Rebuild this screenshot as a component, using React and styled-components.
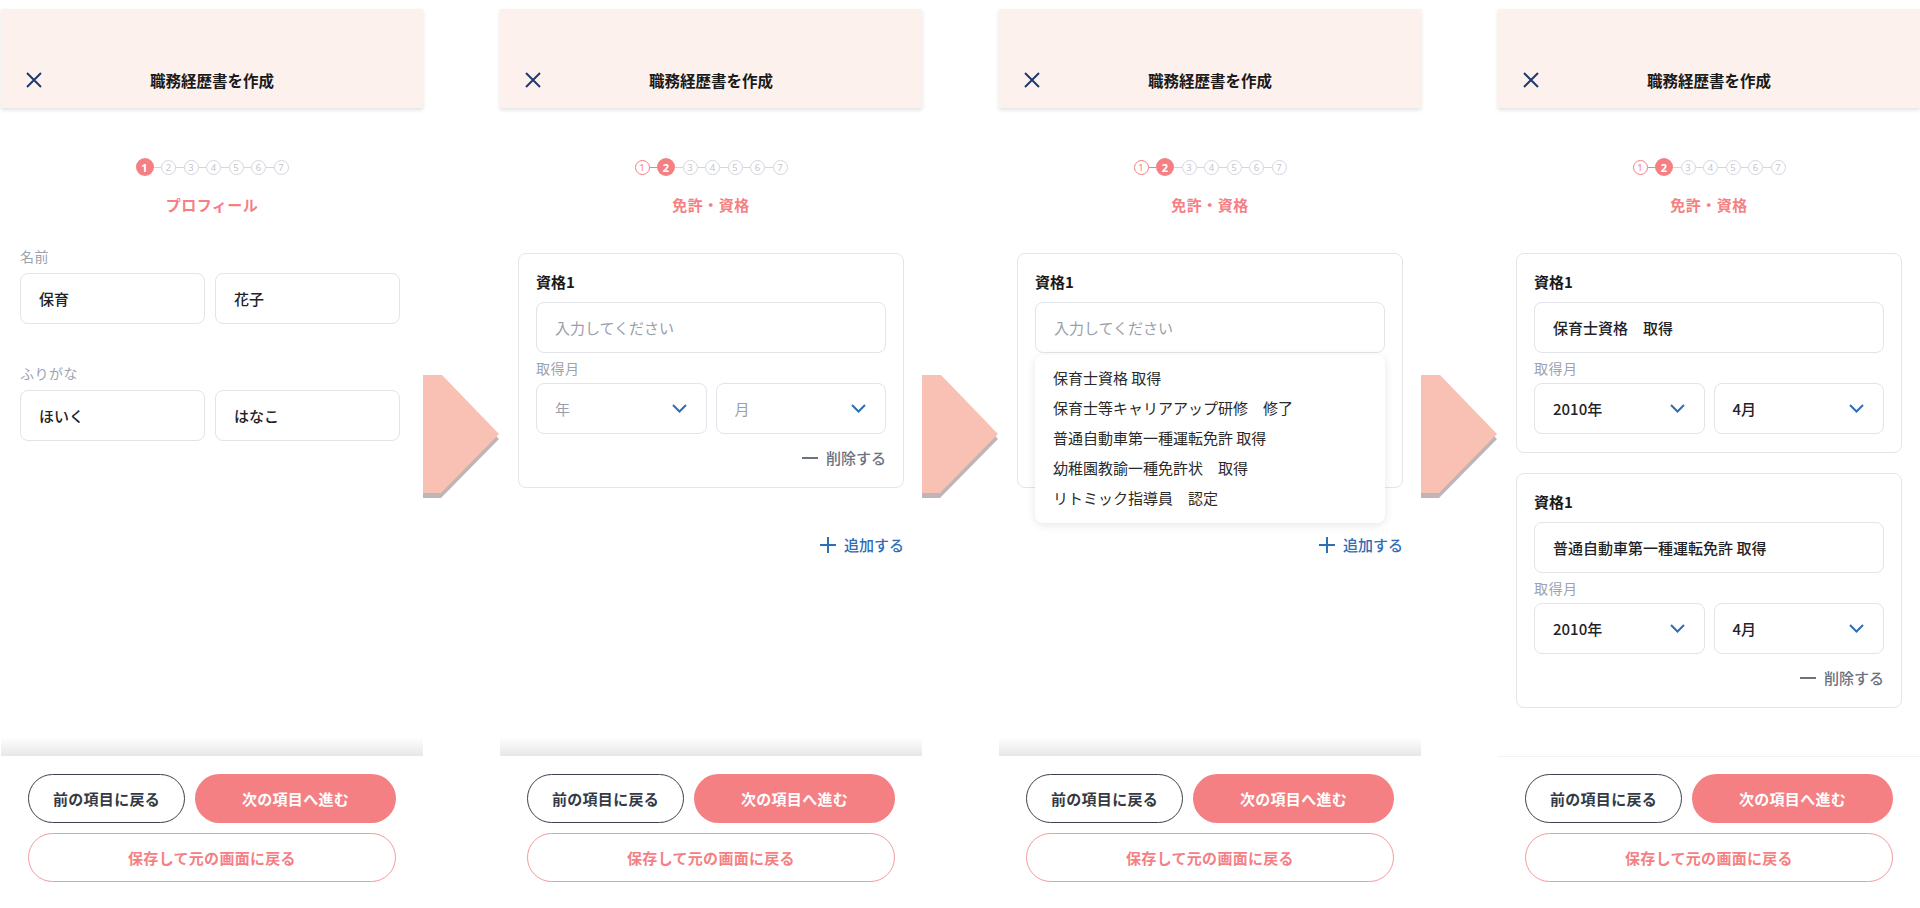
import React from "react";
import styled, { createGlobalStyle, css } from "styled-components";

const PINK = "#f58084";
const BLUE = "#2f6db5";
const NAVY = "#1e3a6e";

const GlobalStyle = createGlobalStyle`
  html, body {
    margin: 0;
    padding: 0;
    background: #fff;
  }
  body {
    font-family: "Noto Sans CJK JP", "Noto Sans", sans-serif;
    color: #222;
    -webkit-font-smoothing: antialiased;
  }
  * {
    box-sizing: border-box;
  }
`;

const Page = styled.div`
  display: flex;
  align-items: flex-start;
  padding: 9px 0 0 1px;
  width: 1920px;
  height: 908px;
  overflow: hidden;
`;

const Screen = styled.div`
  width: 422px;
  height: 899px;
  flex-shrink: 0;
  display: flex;
  flex-direction: column;
  background: #fff;
`;

const Header = styled.header`
  height: 99px;
  flex-shrink: 0;
  background: #fdf1ee;
  box-shadow: 0 2px 4px rgba(0, 0, 0, 0.12);
  display: grid;
  grid-template-columns: 1fr auto 1fr;
  align-items: center;
  align-content: end;
  padding: 0 0 16px 0;
  position: relative;
  z-index: 2;
`;

const CloseButton = styled.span`
  display: flex;
  align-items: center;
  padding-left: 25px;
  height: 24px;
`;

const HeaderTitle = styled.h1`
  margin: 0;
  font-size: 15.5px;
  font-weight: 700;
  line-height: 24px;
  color: #1a1a1a;
`;

const Body = styled.main`
  flex: 1;
  min-height: 0;
  overflow: hidden;
  display: flex;
  flex-direction: column;
  padding: 0 18px;
`;

const Stepper = styled.div`
  margin-top: 50px;
  height: 18px;
  display: flex;
  align-items: center;
  justify-content: center;
`;

const StepDot = styled.span`
  flex-shrink: 0;
  display: flex;
  align-items: center;
  justify-content: center;
  border-radius: 50%;
  font-family: "Noto Sans", sans-serif;
  ${({ $state }) =>
    $state === "active"
      ? css`
          width: 18px;
          height: 18px;
          background: ${PINK};
          color: #fff;
          font-size: 11px;
          font-weight: 700;
        `
      : css`
          width: 15px;
          height: 15px;
          border: 1px solid ${$state === "done" ? PINK : "#d4d6dc"};
          color: ${$state === "done" ? PINK : "#c3c6cd"};
          font-size: 9.5px;
        `}
`;

const StepLine = styled.span`
  width: 7.5px;
  height: 1px;
  flex-shrink: 0;
  background: ${({ $done }) => ($done ? PINK : "#d4d6dc")};
`;

const StepTitle = styled.div`
  margin-top: 18px;
  text-align: center;
  font-size: 15px;
  line-height: 22px;
  font-weight: 700;
  color: ${PINK};
  letter-spacing: 0.5px;
`;

const FieldGroup = styled.section`
  margin-top: ${({ $top }) => $top}px;
  padding: 0 5px 0 1px;
`;

const FieldLabel = styled.div`
  font-size: 14px;
  line-height: 20px;
  color: #9ca3af;
  margin-bottom: ${({ $gap }) => $gap ?? 7}px;
  letter-spacing: 0.5px;
`;

const Pair = styled.div`
  display: grid;
  grid-template-columns: 1fr 1fr;
  gap: ${({ $gap }) => $gap ?? 10}px;
`;

const Field = styled.div`
  height: 51px;
  border: 1px solid #e2e4e9;
  border-radius: 8px;
  display: flex;
  align-items: center;
  justify-content: space-between;
  padding: 0 19px 0 18px;
  font-size: 15px;
  font-weight: ${({ $empty }) => ($empty ? 400 : 500)};
  color: ${({ $empty }) => ($empty ? "#9aa0a9" : "#1f2328")};
  background: #fff;
  white-space: pre;
`;

const Cards = styled.div`
  margin-top: 37px;
  display: flex;
  flex-direction: column;
  gap: 20px;
  flex-shrink: 0;
`;

const Card = styled.div`
  border: 1px solid #e3e5ea;
  border-radius: 8px;
  padding: 17px 17px 18px;
  display: flex;
  flex-direction: column;
`;

const CardTitle = styled.div`
  font-size: 15px;
  line-height: 22px;
  font-weight: 700;
  color: #1a1a1a;
  margin-bottom: 9px;
`;

const InputWrap = styled.div`
  position: relative;
  margin-bottom: 5px;
`;

const Menu = styled.ul`
  position: absolute;
  top: calc(100% + 2px);
  left: 0;
  right: 0;
  z-index: 3;
  margin: 0;
  padding: 8px 0 10px;
  list-style: none;
  background: #fff;
  border-radius: 8px;
  box-shadow: 0 2px 10px rgba(0, 0, 0, 0.1);
`;

const MenuItem = styled.li`
  height: 30px;
  line-height: 30px;
  padding: 0 18px;
  font-size: 15px;
  color: #2a2a2a;
  white-space: pre;
`;

const ActionRow = styled.div`
  display: flex;
  justify-content: flex-end;
  margin-top: ${({ $top }) => $top}px;
  flex-shrink: 0;
`;

const TextAction = styled.span`
  display: inline-flex;
  align-items: center;
  gap: 8px;
  font-size: 15px;
  line-height: 22px;
  font-weight: 500;
  color: ${({ $color }) => $color};
`;

const MinusBar = styled.span`
  width: 16px;
  height: 2.5px;
  background: #6b7280;
`;

const Footer = styled.footer`
  flex-shrink: 0;
  position: relative;
  padding: 18px 27px 26px;
  display: flex;
  flex-direction: column;
  gap: 10px;
  background: #fff;
  ${({ $shade }) =>
    $shade
      ? css`
          &::before {
            content: "";
            position: absolute;
            left: 0;
            right: 0;
            top: -19px;
            height: 19px;
            background: linear-gradient(rgba(230, 231, 234, 0), #e6e7ea);
          }
        `
      : css`
          border-top: 1px solid #f1f2f4;
          padding-top: 17px;
        `}
`;

const ButtonRow = styled.div`
  display: grid;
  grid-template-columns: 157px 1fr;
  gap: 10px;
`;

const Button = styled.button`
  height: 49px;
  border-radius: 25px;
  font-family: inherit;
  font-size: 15px;
  font-weight: 700;
  letter-spacing: 0.3px;
  cursor: pointer;
  ${({ $variant }) =>
    $variant === "primary"
      ? css`
          background: ${PINK};
          border: none;
          color: #fff;
        `
      : $variant === "dark"
      ? css`
          background: #fff;
          border: 1.5px solid #3b404b;
          color: #333a45;
        `
      : css`
          background: #fff;
          border: 1.5px solid #f5999b;
          color: ${PINK};
        `}
`;

const ArrowCell = styled.div`
  width: 77px;
  flex-shrink: 0;
  margin-top: 366px;
  display: flex;
`;

const CloseIcon = () => (
  <svg width="16" height="16" viewBox="0 0 16 16">
    <path d="M1 1 L15 15 M15 1 L1 15" stroke={NAVY} strokeWidth="2" />
  </svg>
);

const Chevron = () => (
  <svg width="15" height="9" viewBox="0 0 15 9">
    <polyline
      points="1,1 7.5,7.5 14,1"
      fill="none"
      stroke={BLUE}
      strokeWidth="2"
    />
  </svg>
);

const PlusIcon = () => (
  <svg width="16" height="16" viewBox="0 0 16 16">
    <path d="M8 0 V16 M0 8 H16" stroke={BLUE} strokeWidth="2" />
  </svg>
);

const Arrow = () => (
  <ArrowCell>
    <svg width="77" height="124" viewBox="0 0 77 124">
      <polygon points="0,5 18,5 76,64 18,123 0,123" fill="#bfb5b6" />
      <polygon points="0,0 19,0 76,59 18,118 0,118" fill="#f9c1b4" />
    </svg>
  </ArrowCell>
);

const Steps = ({ current }) => (
  <Stepper>
    {[1, 2, 3, 4, 5, 6, 7].map((n) => (
      <React.Fragment key={n}>
        {n > 1 && <StepLine $done={n <= current} />}
        <StepDot
          $state={n === current ? "active" : n < current ? "done" : "todo"}
        >
          {n}
        </StepDot>
      </React.Fragment>
    ))}
  </Stepper>
);

const Shell = ({ step, title, shade = true, children }) => (
  <Screen>
    <Header>
      <CloseButton>
        <CloseIcon />
      </CloseButton>
      <HeaderTitle>職務経歴書を作成</HeaderTitle>
      <span />
    </Header>
    <Body>
      <Steps current={step} />
      <StepTitle>{title}</StepTitle>
      {children}
    </Body>
    <Footer $shade={shade}>
      <ButtonRow>
        <Button $variant="dark">前の項目に戻る</Button>
        <Button $variant="primary">次の項目へ進む</Button>
      </ButtonRow>
      <Button $variant="outline">保存して元の画面に戻る</Button>
    </Footer>
  </Screen>
);

const Select = ({ value, placeholder }) => (
  <Field $empty={!value}>
    <span>{value || placeholder}</span>
    <Chevron />
  </Field>
);

const LicenseCard = ({ name, year, month, menu, removable = true }) => (
  <Card>
    <CardTitle>資格1</CardTitle>
    <InputWrap>
      <Field $empty={!name}>{name || "入力してください"}</Field>
      {menu && (
        <Menu>
          {menu.map((m) => (
            <MenuItem key={m}>{m}</MenuItem>
          ))}
        </Menu>
      )}
    </InputWrap>
    <FieldLabel $gap={5}>取得月</FieldLabel>
    <Pair $gap={9}>
      <Select value={year} placeholder="年" />
      <Select value={month} placeholder="月" />
    </Pair>
    {removable && (
      <ActionRow $top={13}>
        <TextAction $color="#6b7280">
          <MinusBar />
          削除する
        </TextAction>
      </ActionRow>
    )}
  </Card>
);

const AddLink = () => (
  <ActionRow $top={46}>
    <TextAction $color={BLUE}>
      <PlusIcon />
      追加する
    </TextAction>
  </ActionRow>
);

const suggestions = [
  "保育士資格 取得",
  "保育士等キャリアアップ研修　修了",
  "普通自動車第一種運転免許 取得",
  "幼稚園教諭一種免許状　取得",
  "リトミック指導員　認定",
];

export default function App() {
  return (
    <>
      <GlobalStyle />
      <Page>
        <Shell step={1} title="プロフィール">
          <FieldGroup $top={30}>
            <FieldLabel>名前</FieldLabel>
            <Pair>
              <Field>保育</Field>
              <Field>花子</Field>
            </Pair>
          </FieldGroup>
          <FieldGroup $top={39}>
            <FieldLabel>ふりがな</FieldLabel>
            <Pair>
              <Field>ほいく</Field>
              <Field>はなこ</Field>
            </Pair>
          </FieldGroup>
        </Shell>
        <Arrow />
        <Shell step={2} title="免許・資格">
          <Cards>
            <LicenseCard />
          </Cards>
          <AddLink />
        </Shell>
        <Arrow />
        <Shell step={2} title="免許・資格">
          <Cards>
            <LicenseCard menu={suggestions} />
          </Cards>
          <AddLink />
        </Shell>
        <Arrow />
        <Shell step={2} title="免許・資格" shade={false}>
          <Cards>
            <LicenseCard
              name="保育士資格　取得"
              year="2010年"
              month="4月"
              removable={false}
            />
            <LicenseCard
              name="普通自動車第一種運転免許 取得"
              year="2010年"
              month="4月"
            />
          </Cards>
          <AddLink />
        </Shell>
      </Page>
    </>
  );
}
